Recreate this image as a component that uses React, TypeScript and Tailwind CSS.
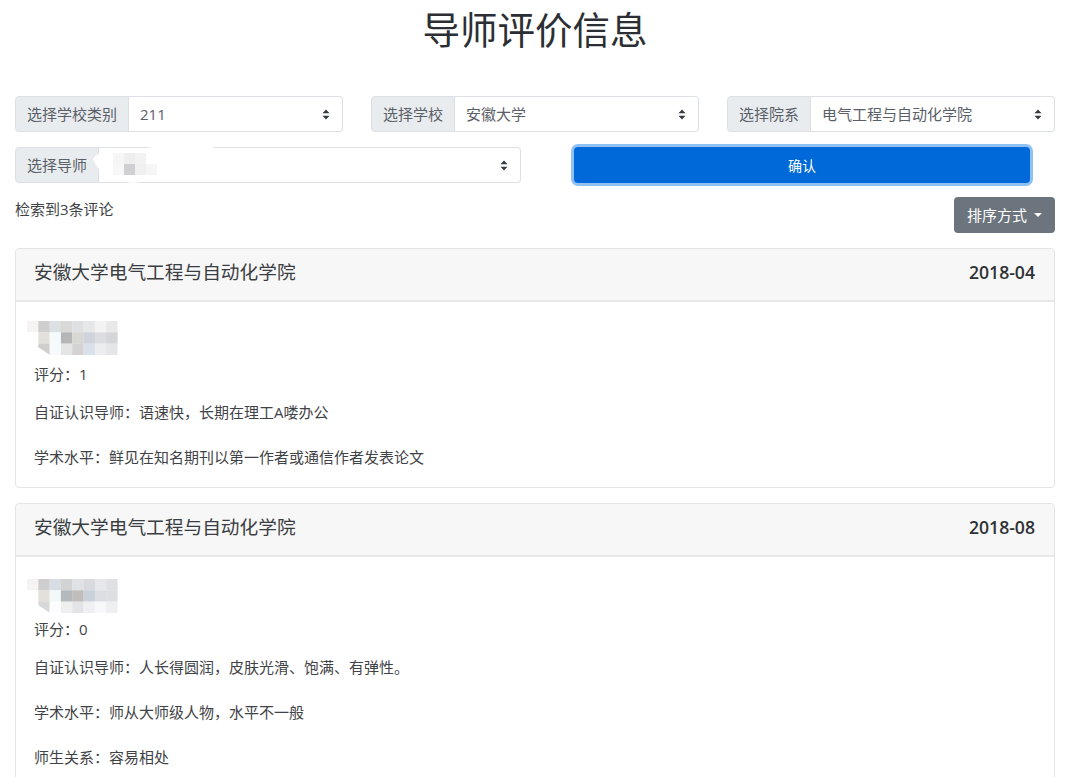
function SelectArrows() {
  return (
    <svg width="8" height="11" viewBox="0 0 8 11" className="shrink-0">
      <path d="M4 0.5 L7.5 4.3 H0.5 Z M4 10.5 L0.5 6.7 H7.5 Z" fill="#343a40" />
    </svg>
  );
}

function SelectGroup({ label, value, className, children }: { label: string; value?: string; className?: string; children?: React.ReactNode }) {
  return (
    <div className={`flex h-[36px] ${className ?? ''}`}>
      <div className="flex items-center px-[11px] bg-[#e9ecef] border border-[#dce0e4] rounded-l-[4px] text-[#5a6067] whitespace-nowrap">
        {label}
      </div>
      <div className="relative flex-1 flex items-center justify-between pl-[11px] pr-[12px] bg-white border border-l-0 border-[#dce0e4] rounded-r-[4px] text-[#5a6067]">
        <span>{value}</span>
        {children}
        <SelectArrows />
      </div>
    </div>
  );
}

// pixelated blur that hides the teacher's name
function Mosaic({ rows, className }: { rows: string[][]; className?: string }) {
  const size = 11.3;
  return (
    <svg width="91" height={rows.length * size} className={`block ${className ?? ''}`}>
      {rows.map((row, y) =>
        row.map((c, x) => <rect key={x + '-' + y} x={x * size} y={y * size} width={size + 0.2} height={size + 0.2} fill={c} />)
      )}
      <path d="M11 34 L11 26 L23 34 Z" fill="#ffffff" />
    </svg>
  );
}

const mosaicOne = [
  ['#f5f4f3', '#cfcecf', '#dcdfe3', '#d9d9d8', '#dfe0e3', '#e6e7e8', '#f3f3f4', '#e9e9ea'],
  ['#ffffff', '#e3dfdb', '#f5fafd', '#b5b6b8', '#d9d7d4', '#cfd3dc', '#dcdde0', '#d5d6d9'],
  ['#ffffff', '#cfcecc', '#f6fafd', '#e3e5e6', '#d5d3d1', '#dbe1ea', '#ecedef', '#e5e6e8'],
];

const mosaicTwo = [
  ['#f5f4f3', '#cfcecf', '#d7dde3', '#d3d3d4', '#e0e1e4', '#d9dadd', '#e6e7e9', '#dfe0e3'],
  ['#ffffff', '#e3dfdb', '#f3f8fb', '#b4b9bc', '#c1bdbb', '#c9d1da', '#dddee3', '#dedfe2'],
  ['#ffffff', '#d8d8d8', '#fbfdfe', '#eeefef', '#e3e4e5', '#eef0f2', '#f7f8f9', '#eeeff0'],
];

function ReviewCard({ date, rows, lines, mosaicClass, className }: { date: string; rows: string[][]; lines: string[]; mosaicClass?: string; className?: string }) {
  return (
    <div className={`border border-[#e4e4e4] rounded-[4px] bg-white ${className ?? ''}`}>
      <div className="flex items-center justify-between h-[53px] pl-[18px] pr-[19px] pb-[5px] bg-[#f7f7f7] border-b-2 border-[#e8e8e8] rounded-t-[4px] text-[18.7px] text-[#3a3d41]">
        <span>安徽大学电气工程与自动化学院</span>
        <span className="font-semibold text-[17.6px] text-[#2f3235]">{date}</span>
      </div>
      <div className="pt-[19px] pl-[11px] pb-[19px]">
        <Mosaic rows={rows} className={mosaicClass} />
        <div className="pl-[7px] mt-[8px] text-[#3f4347]">
          <p className="h-[22px] leading-[22px]">{lines[0]}</p>
          {lines.slice(1).map((line, i) => (
            <p key={i} className={`h-[22px] leading-[22px] ${i === 0 ? 'mt-[16px]' : 'mt-[23px]'}`}>{line}</p>
          ))}
        </div>
      </div>
    </div>
  );
}

export default function App() {
  return (
    <div className="h-[777px] overflow-hidden bg-white pl-[15px] pr-[25px] text-[15px] text-[#3f4347]" style={{ fontFamily: '"Open Sans", "Noto Sans CJK SC", sans-serif' }}>
      <h1 className="text-center text-[37.5px] leading-[60px] text-[#2b2f33]">导师评价信息</h1>

      <div className="grid grid-cols-3 gap-x-[28px] mt-[36px]">
        <SelectGroup label="选择学校类别" value="211" />
        <SelectGroup label="选择学校" value="安徽大学" />
        <SelectGroup label="选择院系" value="电气工程与自动化学院" />
      </div>

      <div className="flex mt-[15px]">
        <SelectGroup label="选择导师" className="w-[506px]">
          <svg width="130" height="50" className="absolute -left-[7px] -top-[9px]">
            <path d="M1 20 Q4 12 30 12 L62 8 L100 1 Q118 0 122 4 L122 9 L80 40 L40 44 Q8 40 1 20 Z" fill="#ffffff" />
            <rect x="21" y="14" width="11" height="11" fill="#f6f6f6" />
            <rect x="32" y="14" width="11" height="11" fill="#eeeeee" />
            <rect x="43" y="14" width="11" height="11" fill="#f2f2f2" />
            <rect x="21" y="25" width="11" height="11" fill="#f7f7f7" />
            <rect x="32" y="25" width="11" height="11" fill="#d0d0d4" />
            <rect x="43" y="25" width="11" height="11" fill="#f0f0f0" />
            <rect x="54" y="25" width="11" height="11" fill="#f6f6f6" />
          </svg>
        </SelectGroup>
        <button className="ml-[53px] w-[456px] h-[36px] bg-[#0069d9] text-white text-[14px] rounded-[4px] ring-[3px] ring-[#8fc1f5]">
          确认
        </button>
      </div>

      <div className="flex justify-between items-start mt-[14px]">
        <span className="leading-[24px]">检索到3条评论</span>
        <button className="flex items-center h-[36px] px-[13px] bg-[#6c757d] text-white rounded-[4px]">
          排序方式
          <span className="ml-[7px] w-0 h-0 border-x-[4.5px] border-x-transparent border-t-[4.5px] border-t-white" />
        </button>
      </div>

      <ReviewCard
        className="mt-[15px]"
        date="2018-04"
        rows={mosaicOne}
        lines={['评分：1', '自证认识导师：语速快，长期在理工A喽办公', '学术水平：鲜见在知名期刊以第一作者或通信作者发表论文']}
      />
      <ReviewCard
        className="mt-[15px]"
        date="2018-08"
        rows={mosaicTwo}
        mosaicClass="translate-y-[3px]"
        lines={['评分：0', '自证认识导师：人长得圆润，皮肤光滑、饱满、有弹性。', '学术水平：师从大师级人物，水平不一般', '师生关系：容易相处']}
      />
    </div>
  );
}
